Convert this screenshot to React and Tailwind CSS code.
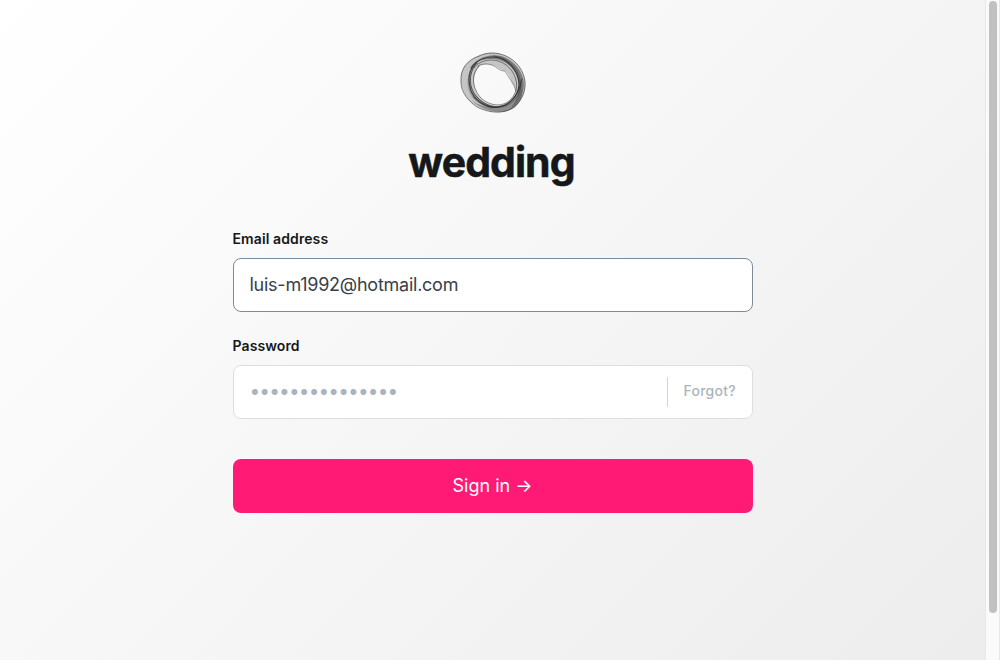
import React from "react";

function Logo() {
  return (
    <svg width="69" height="62" viewBox="0 0 69 62" fill="none" aria-hidden="true">
      <path fillRule="evenodd" fill="#bcbcbc" fillOpacity=".85" d="M21 5C28 1 37 1 45 4C56 8 64 17 67 29C69 39 64 51 56 57C46 63 33 62 22 57C10 51 3 40 3 29C3 15 11 9 21 5ZM22 15C15 22 14 34 19 43C24 51 35 57 45 54C52 51 57 46 58 39C54 31 52 26 48 20C42 20 39 14 31 13.5C27 13 24 14 22 15Z" />
      <path fill="#4c4c4c" fillOpacity=".6" d="M12 17C18 7 31 2 43 5C56 9 65 20 66 33C66 43 61 52 53 57C60 48 64 36 58 23C52 12 42 7 31 8C22 8 16 12 12 17Z" />
      <path fill="#555" fillOpacity=".5" d="M14 50C26 57 40 59 50 52C58 46 62 38 61 27C67 38 65 50 56 57C44 64 27 61 14 50Z" />
      <path fill="#666" fillOpacity=".4" d="M17 12C10 22 10 36 18 45C26 54 37 57 46 54C36 60 22 56 14 46C7 37 8 21 17 12Z" />
      <g stroke="#2b2b2b" strokeLinecap="round">
        <path strokeWidth=".8" strokeOpacity=".75" d="M21 5C29 1 39 1 48 5C59 10 66 20 67 31C68 43 61 54 51 59C41 63 29 61 19 56C10 50 3 41 3 31C2 18 9 9 21 5" />
        <path strokeWidth="1.2" strokeOpacity=".8" d="M13 17C19 8 31 4 42 7C53 11 61 22 61 34C60 45 52 54 40 56C28 58 17 49 13 40C9 29 11 17 19 12" />
        <path strokeWidth="1" strokeOpacity=".75" d="M17 14C10 24 11 38 19 46C26 54 38 59 48 54C57 48 62 39 64 28" />
        <path strokeWidth=".8" strokeOpacity=".7" d="M21 15C13 23 14 36 22 46C30 54 42 57 51 50C57 45 60 37 58 29C55 17 45 9 33 9C26 9 19 12 16 17" />
        <path strokeWidth=".7" strokeOpacity=".65" d="M20 15C25 12 31 13 34 14C39 16 41 20 47 20C50 26 56 32 58 40" />
        <path strokeWidth=".7" strokeOpacity=".65" d="M36 5C49 6 59 16 62 28C65 42 56 54 43 56C32 58 22 53 15 46" />
      </g>
    </svg>
  );
}

const fieldBox = "flex h-[54px] w-full items-center rounded-lg border bg-white";

export default function App() {
  return (
    <div className="flex h-[660px] w-full overflow-hidden font-['Inter',sans-serif] text-[#15171a]">
      <main className="flex min-w-0 flex-1 flex-col items-center bg-[linear-gradient(135deg,#ffffff_0%,#ececec_104%)] pt-[51px]">
        <Logo />
        <h1 className="mt-[23px] mr-[2px] h-[53px] text-[41px] leading-[52px] font-bold tracking-[-0.95px] [-webkit-text-stroke:0.5px_#15171a]">wedding</h1>
        <form className="mt-[40px] w-[520px]" onSubmit={(e) => e.preventDefault()}>
          <label htmlFor="email" className="block h-[20px] text-[14px] leading-[20px] font-semibold tracking-[0.1px]">Email address</label>
          <div className={`${fieldBox} mt-[9px] border-[#7c8b9a] px-[16px]`}>
            <input id="email" type="text" defaultValue="luis-m1992@hotmail.com" className="w-full bg-transparent pb-[2px] text-[18px] tracking-[-0.25px] text-[#394047] outline-none" />
          </div>
          <label htmlFor="password" className="mt-[24px] block h-[20px] text-[14px] leading-[20px] font-semibold tracking-[0.1px]">Password</label>
          <div className={`${fieldBox} mt-[9px] border-[#dddedf] pr-[15px] pl-[16px]`}>
            <input id="password" type="text" placeholder="•••••••••••••••" className="min-w-0 flex-1 bg-transparent pt-px text-[19px] tracking-[-0.83px] text-[#394047] outline-none placeholder:text-[#abb4be]" />
            <span className="mr-[16px] h-[30px] w-px bg-[#ced4d9]" />
            <button type="button" className="w-[53px] pb-[3px] text-left text-[14px] font-medium tracking-[0.25px] whitespace-nowrap text-[#abb4be]">Forgot?</button>
          </div>
          <button type="submit" className="mt-[40px] flex h-[54px] w-full items-center justify-center rounded-lg bg-[#ff1a75] pb-[2px] text-[18px] text-white">Sign in →</button>
        </form>
      </main>
      <div className="h-full w-[15px] shrink-0 border-x border-[#e8e8e8] bg-[#fafafa] pt-px pl-[3px]">
        <div className="h-[612px] w-[8px] rounded-full bg-[#c1c1c1]" />
      </div>
    </div>
  );
}
